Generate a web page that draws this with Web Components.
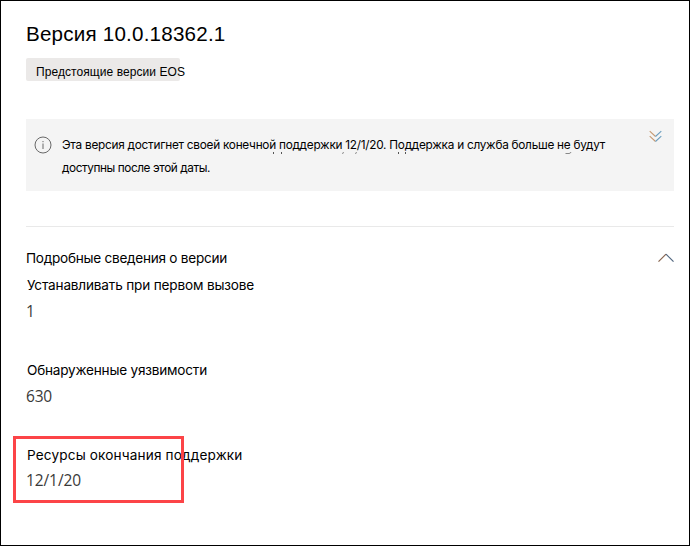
<!DOCTYPE html>
<html lang="ru">
<head>
<meta charset="utf-8">
<title>Версия</title>
<style>
html,body{margin:0;height:100%;background:#fff}
body{font-family:Inter,Roboto,"Liberation Sans",sans-serif;color:#000}
</style>
</head>
<body>
<version-panel></version-panel>
<script>
function define(name, html, ready) {
  const t = document.createElement('template');
  t.innerHTML = html;
  customElements.define(name, class extends HTMLElement {
    connectedCallback() {
      if (this.shadowRoot) return;
      this.attachShadow({mode: 'open'}).append(t.content.cloneNode(true));
      if (ready) ready(this);
    }
  });
}

// One line of text; "fit" is its advance width in pixels, reached by letter spacing.
define('text-line', `<style>
:host{display:block;white-space:nowrap}
span{display:inline-block}
</style><span><slot></slot></span>`, el => {
  const fit = parseFloat(el.getAttribute('fit'));
  const span = el.shadowRoot.querySelector('span');
  const gap = (fit - span.getBoundingClientRect().width) / el.textContent.length;
  span.style.letterSpacing = gap.toFixed(4) + 'px';
});

define('status-badge', `<style>
:host{display:block;box-sizing:border-box;width:154px;height:23px;padding-left:10px;background:#ebe9e8;border-radius:2px;font:12px/28px "Liberation Sans",sans-serif}
</style><slot></slot>`);

define('info-icon', `<style>:host{display:block;width:18px;height:18px}svg{display:block}</style>
<svg width="18" height="18" fill="none" stroke="#686868"><circle cx="9" cy="9" r="8"/><path d="M9 7.5V13M9 5V6.2"/></svg>`);

define('double-chevron', `<style>:host{display:block;width:13px;height:13px}svg{display:block}</style>
<svg width="13" height="13" fill="none" stroke-width="1.1"><path stroke="#c69a73" d="M.7 1.2L6.5 6.5M.7 6.2L6.5 11.5"/><path stroke="#6b9ebf" d="M6.5 6.5L12.3 1.2M6.5 11.5L12.3 6.2"/></svg>`);

define('up-chevron', `<style>:host{display:block;width:16px;height:10px}svg{display:block}</style>
<svg width="16" height="10" fill="none" stroke-width="1.2"><path stroke="#896650" d="M.5 8.7L8 1.2"/><path stroke="#52677f" d="M8 1.2L15.5 8.7"/></svg>`);

define('notice-bar', `<style>
:host{display:flex;position:relative;box-sizing:border-box;height:72px;background:#f4f4f4;padding:15px 12px 0 8px;font-size:11.8px;line-height:23px}
info-icon{margin:2px 10px 0 0}
.body{flex:1;min-width:0}
double-chevron{margin-top:-4px}
.marks{position:absolute;left:0;top:33px}
</style>
<info-icon></info-icon><div class="body"><slot></slot></div><double-chevron></double-chevron>
<svg class="marks" width="560" height="3" fill="none" stroke="#555"><path d="M247.5 0v2M255.5 0v2M372.5 0v2M379.5 0v2"/><path stroke="#888" d="M317.5 0l-1 2M330.5 0l-1 2M539.5 1.5h3.5q1.5 0 2-1.5"/></svg>`);

define('section-head', `<style>
:host{display:flex;justify-content:space-between;height:27px;line-height:26px;font-size:13.6px}
up-chevron{margin-top:8px}
</style><slot></slot><up-chevron></up-chevron>`);

define('detail-field', `<style>
:host{display:block;height:85px;padding-left:1px;font-size:13.6px;line-height:26px}
::slotted([slot=value]){font:15.5px/27px "Open Sans","Noto Sans",sans-serif;color:#393939;margin-left:-1px}
:host(.tight) ::slotted([slot=value]){line-height:25px}
</style><slot></slot><slot name="value"></slot>`);

define('focus-frame', `<style>
:host{display:block;position:absolute;left:13px;top:436px;width:171px;height:67px;box-sizing:border-box;border:3px solid #fc4447}
</style>`);

define('version-panel', `<style>
:host{display:block;position:relative;box-sizing:border-box;width:690px;height:546px;border:1px solid #000;padding:21px 15px 0 25px}
.title{font:20.6px/24px "Liberation Sans",sans-serif;height:36px}
notice-bar{margin-top:38px}
hr{height:1px;border:0;background:#e9e9e9;margin:35px 0 18px}
focus-frame{margin:-1px}
</style>
<text-line class="title" fit="199.5">Версия 10.0.18362.1</text-line>
<status-badge><text-line fit="149">Предстоящие версии EOS</text-line></status-badge>
<notice-bar>
<text-line fit="543">Эта версия достигнет своей конечной поддержки 12/1/20. Поддержка и служба больше не будут</text-line>
<text-line fit="148">доступны после этой даты.</text-line>
</notice-bar>
<hr>
<section-head><text-line fit="201">Подробные сведения о версии</text-line></section-head>
<detail-field><text-line fit="227">Устанавливать при первом вызове</text-line><text-line slot="value" fit="8.5">1</text-line></detail-field>
<detail-field><text-line fit="180">Обнаруженные уязвимости</text-line><text-line slot="value" fit="26">630</text-line></detail-field>
<detail-field class="tight"><text-line fit="215.5">Ресурсы окончания поддержки</text-line><text-line slot="value" fit="55">12/1/20</text-line></detail-field>
<focus-frame></focus-frame>`);
</script>
</body>
</html>
